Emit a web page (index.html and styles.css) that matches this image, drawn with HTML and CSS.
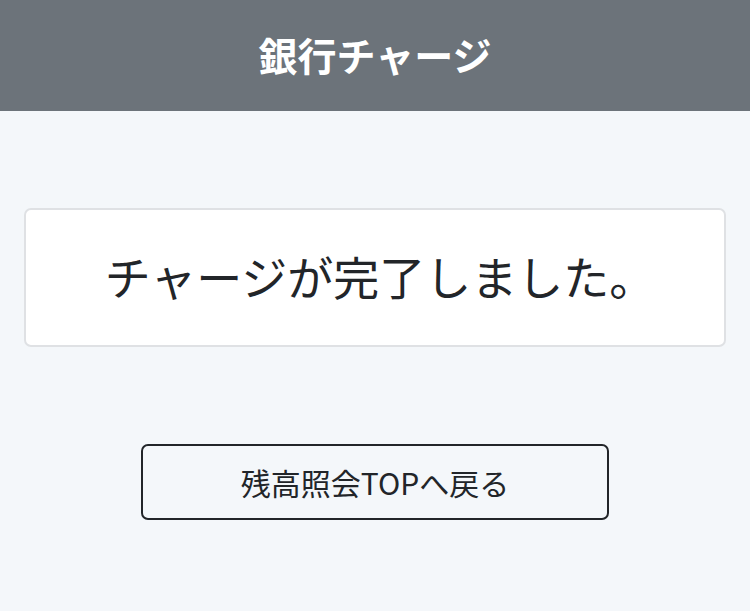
FILE: index.html
```html
<!DOCTYPE html>
<html lang="ja">
<head>
	<meta charset="utf-8">
	<title>銀行チャージ</title>
	<link rel="stylesheet" href="styles.css">
</head>
<body>
	<header class="topBar">
		<h1>銀行チャージ</h1>
	</header>
	<main class="content">
		<div class="doneBox">
			<p>チャージが完了しました。</p>
		</div>
		<a class="backButton" href="#">残高照会TOPへ戻る</a>
	</main>
</body>
</html>
```

FILE: styles.css
```css
body {
	margin: 0;
	background: #f4f7fa;
	font-family: "Noto Sans CJK JP", "Noto Sans", sans-serif;
	color: #222529;
}

.topBar {
	background: #6c737a;
	height: 111px;
	display: flex;
	align-items: center;
	justify-content: center;
}

.topBar h1 {
	margin: 0;
	color: #fff;
	font-size: 39px;
	font-weight: bold;
	line-height: 1;
	padding-bottom: 2px;
}

.content {
	display: flex;
	flex-direction: column;
	align-items: center;
	padding: 97px 24px 0;
}

.doneBox {
	box-sizing: border-box;
	width: 100%;
	height: 139px;
	background: #fff;
	border: 2px solid #dfe1e4;
	border-radius: 7px;
	display: flex;
	align-items: center;
	justify-content: center;
}

.doneBox p {
	margin: 0 0 0 10px;
	font-size: 46px;
	line-height: 1;
	padding-bottom: 6px;
}

.backButton {
	box-sizing: border-box;
	margin-top: 97px;
	width: 468px;
	height: 76px;
	border: 2px solid #222529;
	border-radius: 7px;
	display: flex;
	align-items: center;
	justify-content: center;
	color: #222529;
	text-decoration: none;
	font-size: 30px;
}
```
